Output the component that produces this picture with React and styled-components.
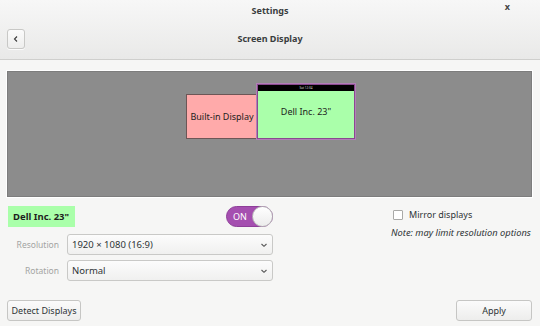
import React from 'react';
import styled, { createGlobalStyle } from 'styled-components';

const GlobalStyle = createGlobalStyle`
  html, body {
    margin: 0;
    padding: 0;
    background: #f6f6f5;
  }
  body {
    font-family: "Noto Sans", "Open Sans", sans-serif;
    color: #2e3436;
  }
`;

const Window = styled.div`
  width: 540px;
  height: 326px;
  display: flex;
  flex-direction: column;
  background: #f6f6f5;
  overflow: hidden;
`;

const Titlebar = styled.header`
  height: 60px;
  display: grid;
  grid-template-rows: 21px 39px;
  background: linear-gradient(#f7f7f7, #e9e9e8);
  border-bottom: 1px solid #cfcfcd;
  box-sizing: border-box;
`;

const TitleRow = styled.div`
  position: relative;
  display: flex;
  align-items: center;
  justify-content: center;
  font-size: 9px;
  font-weight: 700;
  color: #3a3d3e;
`;

const Close = styled.span`
  position: absolute;
  right: 30px;
  top: 0px;
  font-size: 9px;
  font-weight: 700;
  color: #444;
`;

const HeaderRow = styled.div`
  display: grid;
  grid-template-columns: 40px 1fr 40px;
  align-items: center;
  padding: 0 7px 4px;
`;

const BackButton = styled.button`
  width: 18px;
  height: 20px;
  padding: 0;
  display: flex;
  align-items: center;
  justify-content: center;
  border: 1px solid #c8c8c6;
  border-radius: 3px;
  background: linear-gradient(#fbfbfb, #eeeeed);
  box-shadow: 0 1px 0 rgba(255, 255, 255, 0.8);
`;

const HeaderTitle = styled.div`
  text-align: center;
  font-size: 9px;
  font-weight: 700;
  color: #3a3d3e;
`;

const Content = styled.main`
  flex: 1;
  display: flex;
  flex-direction: column;
  padding: 11px 8px 5px 7px;
`;

const Canvas = styled.div`
  position: relative;
  height: 126px;
  background: #8c8c8c;
  border: 1px solid #7d7d7d;
  box-shadow: 0 0 0 1px #ffffff;
  box-sizing: border-box;
`;

const Monitor = styled.div`
  position: absolute;
  box-sizing: border-box;
  display: flex;
  flex-direction: column;
  background: ${p => p.$bg};
  border: 1px solid ${p => (p.$selected ? '#8a4a8f' : '#6d5656')};
  box-shadow: ${p => (p.$selected ? '0 0 0 1px #b17fb7' : 'none')};
  font-size: 9px;
  color: #1d1d1d;
`;

const MonitorBar = styled.div`
  height: 6px;
  background: #000;
  color: #ddd;
  font-size: 3px;
  line-height: 6px;
  text-align: center;
`;

const MonitorLabel = styled.div`
  flex: 1;
  display: flex;
  align-items: center;
  justify-content: center;
  padding-bottom: ${p => p.$shift || 0}px;
`;

const Controls = styled.div`
  display: grid;
  grid-template-columns: 266px 1fr;
  margin-top: 8px;
`;

const LeftCol = styled.div`
  display: flex;
  flex-direction: column;
`;

const NameRow = styled.div`
  display: flex;
  align-items: center;
  justify-content: space-between;
  height: 22px;
  margin-bottom: 7px;
`;

const NameTag = styled.div`
  background: #aaffaa;
  font-size: 9.5px;
  font-weight: 700;
  padding: 4px 6px 4px 5px;
  margin-left: 1px;
  color: #1e1e1e;
`;

const Switch = styled.div`
  width: 47px;
  height: 21px;
  border-radius: 11px;
  background: #a54fb0;
  position: relative;
  display: flex;
  align-items: center;
  padding-left: 6px;
  box-sizing: border-box;
  color: #fff;
  font-size: 9px;
  border: 1px solid #8e3f99;
`;

const Knob = styled.div`
  position: absolute;
  right: -1px;
  top: -1px;
  width: 21px;
  height: 21px;
  border-radius: 50%;
  background: linear-gradient(#ffffff, #ececec);
  border: 1px solid #b9b9b9;
  box-sizing: border-box;
`;

const FieldRow = styled.div`
  display: grid;
  grid-template-columns: 52px 1fr;
  column-gap: 8px;
  align-items: center;
  margin-bottom: 5px;
`;

const FieldLabel = styled.span`
  text-align: right;
  font-size: 8.5px;
  color: #a3a4a2;
`;

const Select = styled.div`
  height: 21px;
  display: flex;
  align-items: center;
  justify-content: space-between;
  padding: 0 4px 0 4px;
  border: 1px solid #c9c9c7;
  border-radius: 3px;
  background: linear-gradient(#fcfcfc, #f0f0ef);
  box-sizing: border-box;
  font-size: 9.5px;
  color: #2e3436;
`;

const RightCol = styled.div`
  display: flex;
  flex-direction: column;
  padding-left: 120px;
  padding-top: 3px;
`;

const CheckRow = styled.label`
  display: flex;
  align-items: center;
  gap: 6px;
  font-size: 9px;
  color: #2e3436;
`;

const Box = styled.span`
  width: 8px;
  height: 8px;
  border: 1px solid #a9a9a7;
  border-radius: 1px;
  background: #fff;
`;

const Note = styled.div`
  margin-top: 5px;
  margin-left: -2px;
  font-size: 9.3px;
  font-style: italic;
  color: #2e3436;
  white-space: nowrap;
`;

const Footer = styled.div`
  margin-top: auto;
  display: flex;
  justify-content: space-between;
  align-items: center;
`;

const Button = styled.button`
  height: 21px;
  width: ${p => p.$width}px;
  padding: 0;
  border: 1px solid #c6c6c4;
  border-radius: 3px;
  background: linear-gradient(#fbfbfb, #ededec);
  font-family: inherit;
  font-size: 9px;
  color: #2e3436;
`;

const Chevron = ({ dir }) => (
  <svg width="8" height="8" viewBox="0 0 8 8">
    {dir === 'left' ? (
      <path d="M5 1.5 L2.5 4 L5 6.5" fill="none" stroke="#3a3a3a" strokeWidth="1.1" />
    ) : (
      <path d="M1.5 3 L4 5.3 L6.5 3" fill="none" stroke="#555" strokeWidth="1.1" />
    )}
  </svg>
);

const monitors = [
  { id: 'builtin', name: 'Built-in Display', x: 178, y: 22, w: 72, h: 45, bg: '#ffaaaa' },
  { id: 'dell', name: 'Dell Inc. 23"', x: 249, y: 12, w: 98, h: 55, bg: '#aaffaa', selected: true, primary: true },
];

export default function App() {
  return (
    <Window>
      <GlobalStyle />
      <Titlebar>
        <TitleRow>
          Settings
          <Close>x</Close>
        </TitleRow>
        <HeaderRow>
          <BackButton><Chevron dir="left" /></BackButton>
          <HeaderTitle>Screen Display</HeaderTitle>
          <span />
        </HeaderRow>
      </Titlebar>
      <Content>
        <Canvas>
          {monitors.map(m => (
            <Monitor
              key={m.id}
              $bg={m.bg}
              $selected={m.selected}
              style={{ left: m.x, top: m.y, width: m.w, height: m.h }}
            >
              {m.primary && <MonitorBar>Sat 12:34</MonitorBar>}
              <MonitorLabel $shift={m.primary ? 6 : 0}>{m.name}</MonitorLabel>
            </Monitor>
          ))}
        </Canvas>
        <Controls>
          <LeftCol>
            <NameRow>
              <NameTag>Dell Inc. 23"</NameTag>
              <Switch>
                ON
                <Knob />
              </Switch>
            </NameRow>
            <FieldRow>
              <FieldLabel>Resolution</FieldLabel>
              <Select>1920 × 1080 (16:9)<Chevron /></Select>
            </FieldRow>
            <FieldRow>
              <FieldLabel>Rotation</FieldLabel>
              <Select>Normal<Chevron /></Select>
            </FieldRow>
          </LeftCol>
          <RightCol>
            <CheckRow><Box />Mirror displays</CheckRow>
            <Note>Note: may limit resolution options</Note>
          </RightCol>
        </Controls>
        <Footer>
          <Button $width={74}>Detect Displays</Button>
          <Button $width={76}>Apply</Button>
        </Footer>
      </Content>
    </Window>
  );
}
